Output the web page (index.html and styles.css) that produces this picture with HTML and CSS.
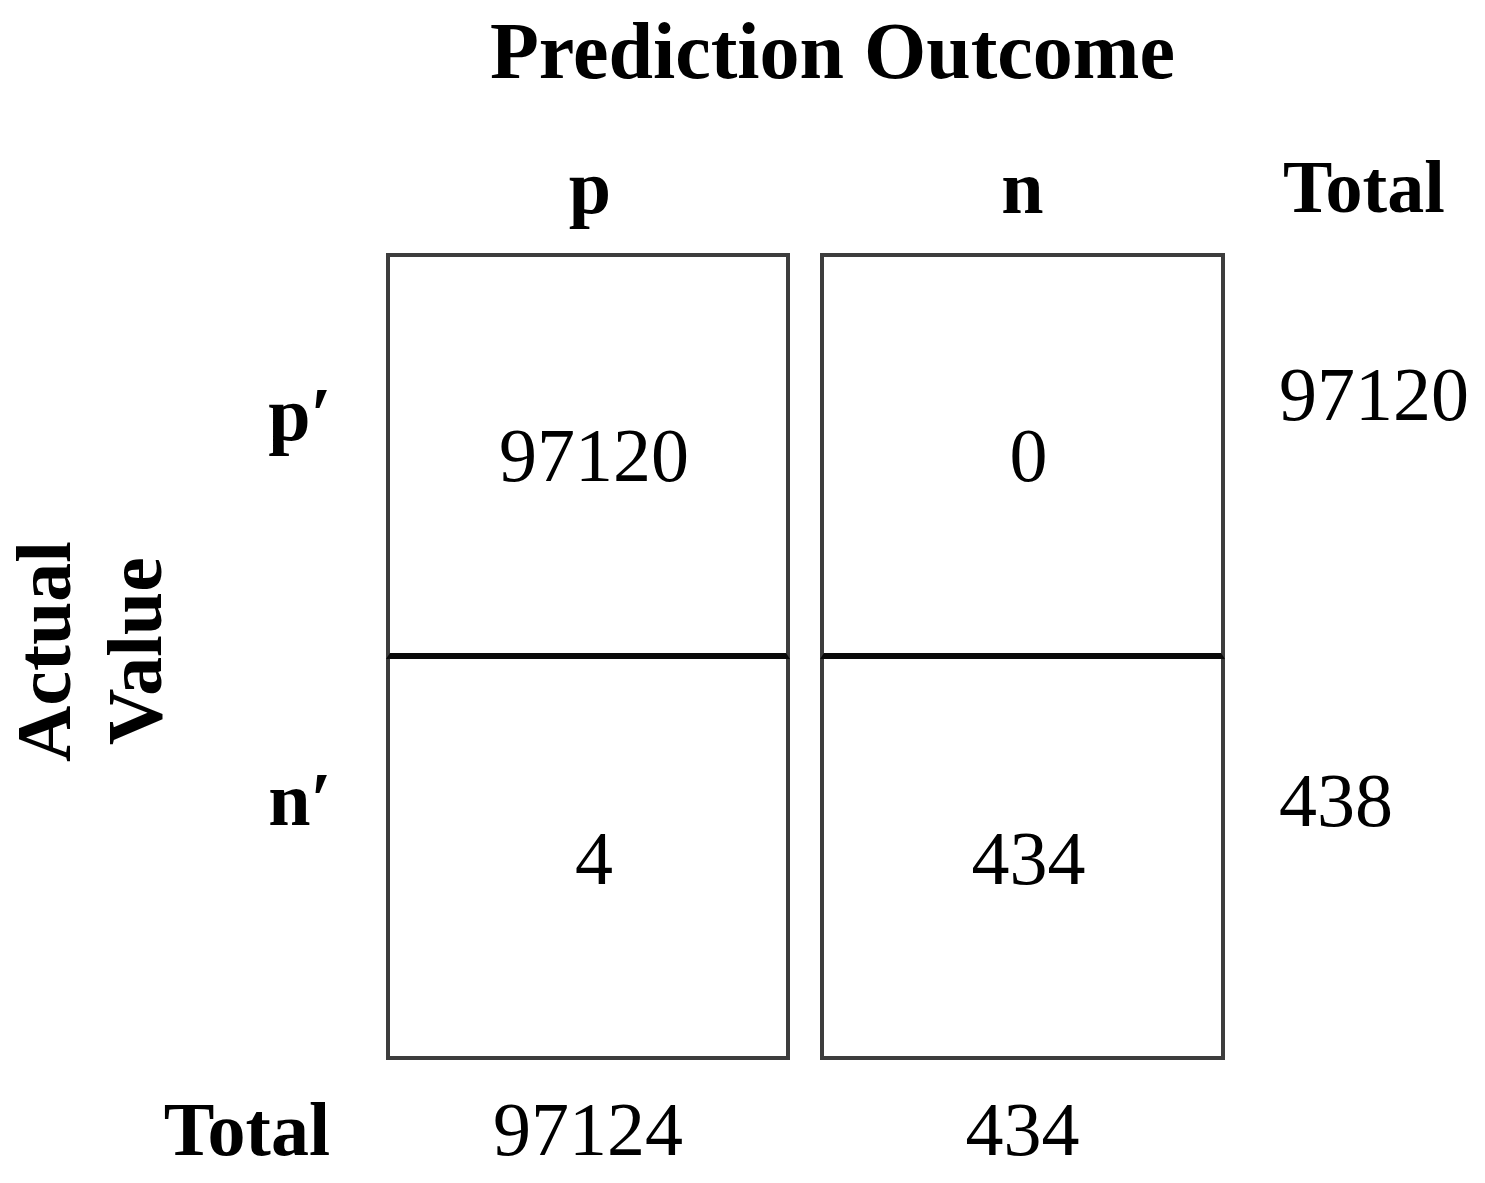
FILE: index.html
```html
<!DOCTYPE html>
<html lang="en">

<head>
    <meta charset="UTF-8">
    <meta name="viewport" content="width=device-width, initial-scale=1.0">
    <title>Confusion Matrix</title>
    <link rel="stylesheet" href="styles.css">
</head>

<body>
    <div class="matrix">
        <div class="title">Prediction Outcome</div>

        <div class="col-head head-p">p</div>
        <div class="col-head head-n">n</div>
        <div class="col-head head-total">Total</div>

        <div class="axis-label"><span>Actual<br>Value</span></div>

        <div class="row-label label-p">p′</div>
        <div class="cell cell-top box-left">97120</div>
        <div class="cell cell-top box-right">0</div>
        <div class="row-total total-p">97120</div>

        <div class="row-label label-n">n′</div>
        <div class="cell cell-bottom box-left">4</div>
        <div class="cell cell-bottom box-right">434</div>
        <div class="row-total total-n">438</div>

        <div class="bottom-label">Total</div>
        <div class="col-total box-left">97124</div>
        <div class="col-total box-right">434</div>
    </div>
</body>
</html>
```

FILE: styles.css
```css
body {
    margin: 0;
    padding: 0;
    background: #fff;
    color: #000;
    font-family: "Liberation Serif", "Times New Roman", serif;
}

.matrix {
    display: grid;
    grid-template-columns: 174px 212px 404px 30px 405px 1fr;
    grid-template-rows: 120px 133px 406px 401px 1fr;
    width: 1485px;
    height: 1183px;
    font-size: 76px;
    line-height: 76px;
}

.title {
    grid-column: 3 / 6;
    grid-row: 1;
    padding: 11px 0 0 54px;
    text-align: center;
    font-size: 80px;
    line-height: 80px;
    font-weight: bold;
}

.col-head {
    grid-row: 2;
    align-self: end;
    padding-bottom: 28px;
    font-weight: bold;
}

.head-p {
    grid-column: 3;
    text-align: center;
    padding-left: 4px;
}

.head-n {
    grid-column: 5;
    text-align: center;
}

.head-total {
    grid-column: 6;
    padding-left: 58px;
    font-size: 74px;
}

.axis-label {
    grid-column: 1;
    grid-row: 3 / 5;
    display: flex;
    align-items: center;
    justify-content: center;
    padding-left: 4px;
    padding-bottom: 10px;
}

.axis-label span {
    writing-mode: vertical-rl;
    transform: rotate(180deg);
    text-align: center;
    font-weight: bold;
    font-size: 78px;
    line-height: 91px;
}

.row-label {
    grid-column: 2;
    text-align: right;
    padding-right: 54px;
    font-weight: bold;
}

.label-p {
    grid-row: 3;
    padding-top: 123px;
}

.label-n {
    grid-row: 4;
    padding-top: 102px;
}

.cell {
    display: flex;
    align-items: center;
    justify-content: center;
    padding-left: 12px;
    border: 4px solid #3d3d3d;
}

.cell-top {
    grid-row: 3;
    border-bottom: 6px solid #0a0a0a;
}

.cell-bottom {
    grid-row: 4;
    border-top: none;
}

.box-left {
    grid-column: 3;
}

.box-right {
    grid-column: 5;
}

.row-total {
    grid-column: 6;
    padding: 103px 0 0 54px;
}

.total-p {
    grid-row: 3;
}

.total-n {
    grid-row: 4;
}

.bottom-label {
    grid-column: 1 / 3;
    grid-row: 5;
    text-align: right;
    padding: 31px 56px 0 0;
    font-weight: bold;
}

.col-total {
    grid-row: 5;
    text-align: center;
    padding-top: 31px;
}
```
